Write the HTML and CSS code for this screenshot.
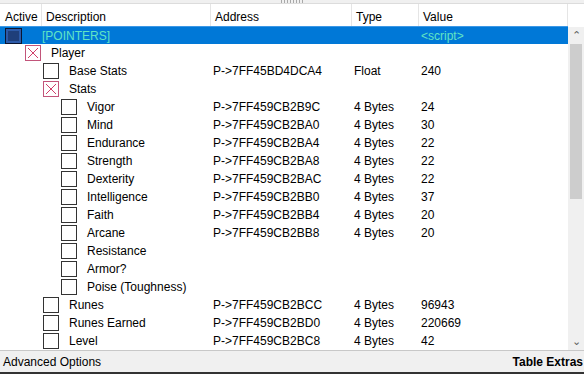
FILE: index.html
```html
<!DOCTYPE html>
<html lang="en">

<head>
    <meta charset="UTF-8">
    <title>Cheat Table</title>
    <link rel="stylesheet" href="styles.css">
</head>

<body>
    <div class="window">
        <div class="splitter"><span class="grip"></span></div>

        <div class="list">
            <div class="table">
                <div class="head">
                    <div>Active</div>
                    <div>Description</div>
                    <div>Address</div>
                    <div>Type</div>
                    <div>Value</div>
                </div>

                <div class="row selected">
                    <div class="desc lvl0"><span class="box dark"></span>[POINTERS]</div>
                    <div></div>
                    <div></div>
                    <div class="script">&lt;script&gt;</div>
                </div>
                <div class="row">
                    <div class="desc lvl1"><span class="box cross"><svg width="16" height="16" viewBox="0 0 16 16"><rect x="0.5" y="0.5" width="15" height="15" fill="#fff" stroke="#c2557a"/><path d="M3 3L13 13M13 3L3 13" stroke="#d0406a" stroke-width="1"/></svg></span>Player</div>
                    <div></div>
                    <div></div>
                    <div></div>
                </div>
                <div class="row">
                    <div class="desc lvl2"><span class="box"></span>Base Stats</div>
                    <div>P-&gt;7FF45BD4DCA4</div>
                    <div>Float</div>
                    <div>240</div>
                </div>
                <div class="row">
                    <div class="desc lvl2"><span class="box cross"><svg width="16" height="16" viewBox="0 0 16 16"><rect x="0.5" y="0.5" width="15" height="15" fill="#fff" stroke="#c2557a"/><path d="M3 3L13 13M13 3L3 13" stroke="#d0406a" stroke-width="1"/></svg></span>Stats</div>
                    <div></div>
                    <div></div>
                    <div></div>
                </div>
                <div class="row">
                    <div class="desc lvl3"><span class="box"></span>Vigor</div>
                    <div>P-&gt;7FF459CB2B9C</div>
                    <div>4 Bytes</div>
                    <div>24</div>
                </div>
                <div class="row">
                    <div class="desc lvl3"><span class="box"></span>Mind</div>
                    <div>P-&gt;7FF459CB2BA0</div>
                    <div>4 Bytes</div>
                    <div>30</div>
                </div>
                <div class="row">
                    <div class="desc lvl3"><span class="box"></span>Endurance</div>
                    <div>P-&gt;7FF459CB2BA4</div>
                    <div>4 Bytes</div>
                    <div>22</div>
                </div>
                <div class="row">
                    <div class="desc lvl3"><span class="box"></span>Strength</div>
                    <div>P-&gt;7FF459CB2BA8</div>
                    <div>4 Bytes</div>
                    <div>22</div>
                </div>
                <div class="row">
                    <div class="desc lvl3"><span class="box"></span>Dexterity</div>
                    <div>P-&gt;7FF459CB2BAC</div>
                    <div>4 Bytes</div>
                    <div>22</div>
                </div>
                <div class="row">
                    <div class="desc lvl3"><span class="box"></span>Intelligence</div>
                    <div>P-&gt;7FF459CB2BB0</div>
                    <div>4 Bytes</div>
                    <div>37</div>
                </div>
                <div class="row">
                    <div class="desc lvl3"><span class="box"></span>Faith</div>
                    <div>P-&gt;7FF459CB2BB4</div>
                    <div>4 Bytes</div>
                    <div>20</div>
                </div>
                <div class="row">
                    <div class="desc lvl3"><span class="box"></span>Arcane</div>
                    <div>P-&gt;7FF459CB2BB8</div>
                    <div>4 Bytes</div>
                    <div>20</div>
                </div>
                <div class="row">
                    <div class="desc lvl3"><span class="box"></span>Resistance</div>
                    <div></div>
                    <div></div>
                    <div></div>
                </div>
                <div class="row">
                    <div class="desc lvl3"><span class="box"></span>Armor?</div>
                    <div></div>
                    <div></div>
                    <div></div>
                </div>
                <div class="row">
                    <div class="desc lvl3"><span class="box"></span>Poise (Toughness)</div>
                    <div></div>
                    <div></div>
                    <div></div>
                </div>
                <div class="row">
                    <div class="desc lvl2"><span class="box"></span>Runes</div>
                    <div>P-&gt;7FF459CB2BCC</div>
                    <div>4 Bytes</div>
                    <div>96943</div>
                </div>
                <div class="row">
                    <div class="desc lvl2"><span class="box"></span>Runes Earned</div>
                    <div>P-&gt;7FF459CB2BD0</div>
                    <div>4 Bytes</div>
                    <div>220669</div>
                </div>
                <div class="row">
                    <div class="desc lvl2"><span class="box"></span>Level</div>
                    <div>P-&gt;7FF459CB2BC8</div>
                    <div>4 Bytes</div>
                    <div>42</div>
                </div>
            </div>

            <div class="scrollbar">
                <div class="arrow">&#8963;</div>
                <div class="track"><div class="thumb"></div></div>
                <div class="arrow">&#8964;</div>
            </div>
        </div>

        <div class="footer">
            <span>Advanced Options</span>
            <span class="extras">Table Extras</span>
        </div>
    </div>
</body>

</html>
```

FILE: styles.css
```css
/*General*/
* {
    margin: 0;
    padding: 0;
    box-sizing: border-box;
}

html,
body {
    width: 584px;
    height: 374px;
    overflow: hidden;
}

body {
    font-family: 'Liberation Sans', Arial, sans-serif;
    font-size: 12px;
    color: #000;
    background-color: #fff;
}

.window {
    display: flex;
    flex-direction: column;
    height: 374px;
}

/*splitter*/
.splitter {
    height: 4px;
    background-color: #f0f0f0;
    border-bottom: 1px solid #dcdcdc;
    display: flex;
    justify-content: center;
}

.splitter .grip {
    width: 24px;
    height: 3px;
    margin-left: 2px;
    background-image: repeating-linear-gradient(90deg, #a8a8a8 0 1px, transparent 1px 3px);
}

/*list*/
.list {
    display: flex;
    flex: 1;
    background-color: #fff;
}

.table {
    flex: 1;
    display: flex;
    flex-direction: column;
}

.head {
    display: grid;
    grid-template-columns: 42px 169px 141px 67px 1fr;
    height: 22px;
}

.head div {
    padding: 3px 0 0 4px;
    border-right: 1px solid #e5e5e5;
    height: 100%;
    display: flex;
    align-items: center;
}

.head div:first-child {
    padding-left: 5px;
}

.row {
    display: grid;
    grid-template-columns: 211px 141px 67px 1fr;
    height: 18px;
    align-items: center;
    white-space: nowrap;
}

.row>div {
    padding-left: 2px;
}

.row.selected {
    background-color: #0078d7;
    border-top: 1px solid #3c98e6;
}

.row.selected .desc {
    color: #62e4c4;
}

.script {
    color: #62e4c4;
}

/*description column*/
.desc {
    display: flex;
    align-items: center;
}

.row>.desc {
    padding-left: 0;
}

.box {
    width: 16px;
    height: 16px;
    border: 1px solid #333;
    background-color: #fff;
    margin-right: 10px;
    flex-shrink: 0;
}

.box.cross {
    border: none;
    display: flex;
}

.box.dark {
    width: 17px;
    height: 16px;
    background-color: #1f3f7a;
    border: 1px solid #0a1530;
    box-shadow: inset 0 0 0 2px #2c5aa8;
    margin-right: 20px;
}

.lvl0 {
    padding-left: 5px !important;
}

.lvl1 {
    padding-left: 25px !important;
}

.lvl2 {
    padding-left: 43px !important;
}

.lvl3 {
    padding-left: 61px !important;
}

/*scrollbar*/
.scrollbar {
    width: 16px;
    margin-top: 23px;
    background-color: #f0f0f0;
    display: flex;
    flex-direction: column;
}

.arrow {
    height: 17px;
    text-align: center;
    font-size: 11px;
    line-height: 17px;
    color: #606060;
}

.track {
    flex: 1;
    padding: 0 2px;
}

.thumb {
    height: 155px;
    background-color: #cdcdcd;
}

/*footer*/
.footer {
    height: 24px;
    background-color: #f0f0f0;
    border-top: 1px solid #c8c8c8;
    border-bottom: 2px solid #333;
    display: flex;
    justify-content: space-between;
    align-items: center;
    padding: 0 1px 0 3px;
}

.extras {
    font-weight: bold;
}
```
